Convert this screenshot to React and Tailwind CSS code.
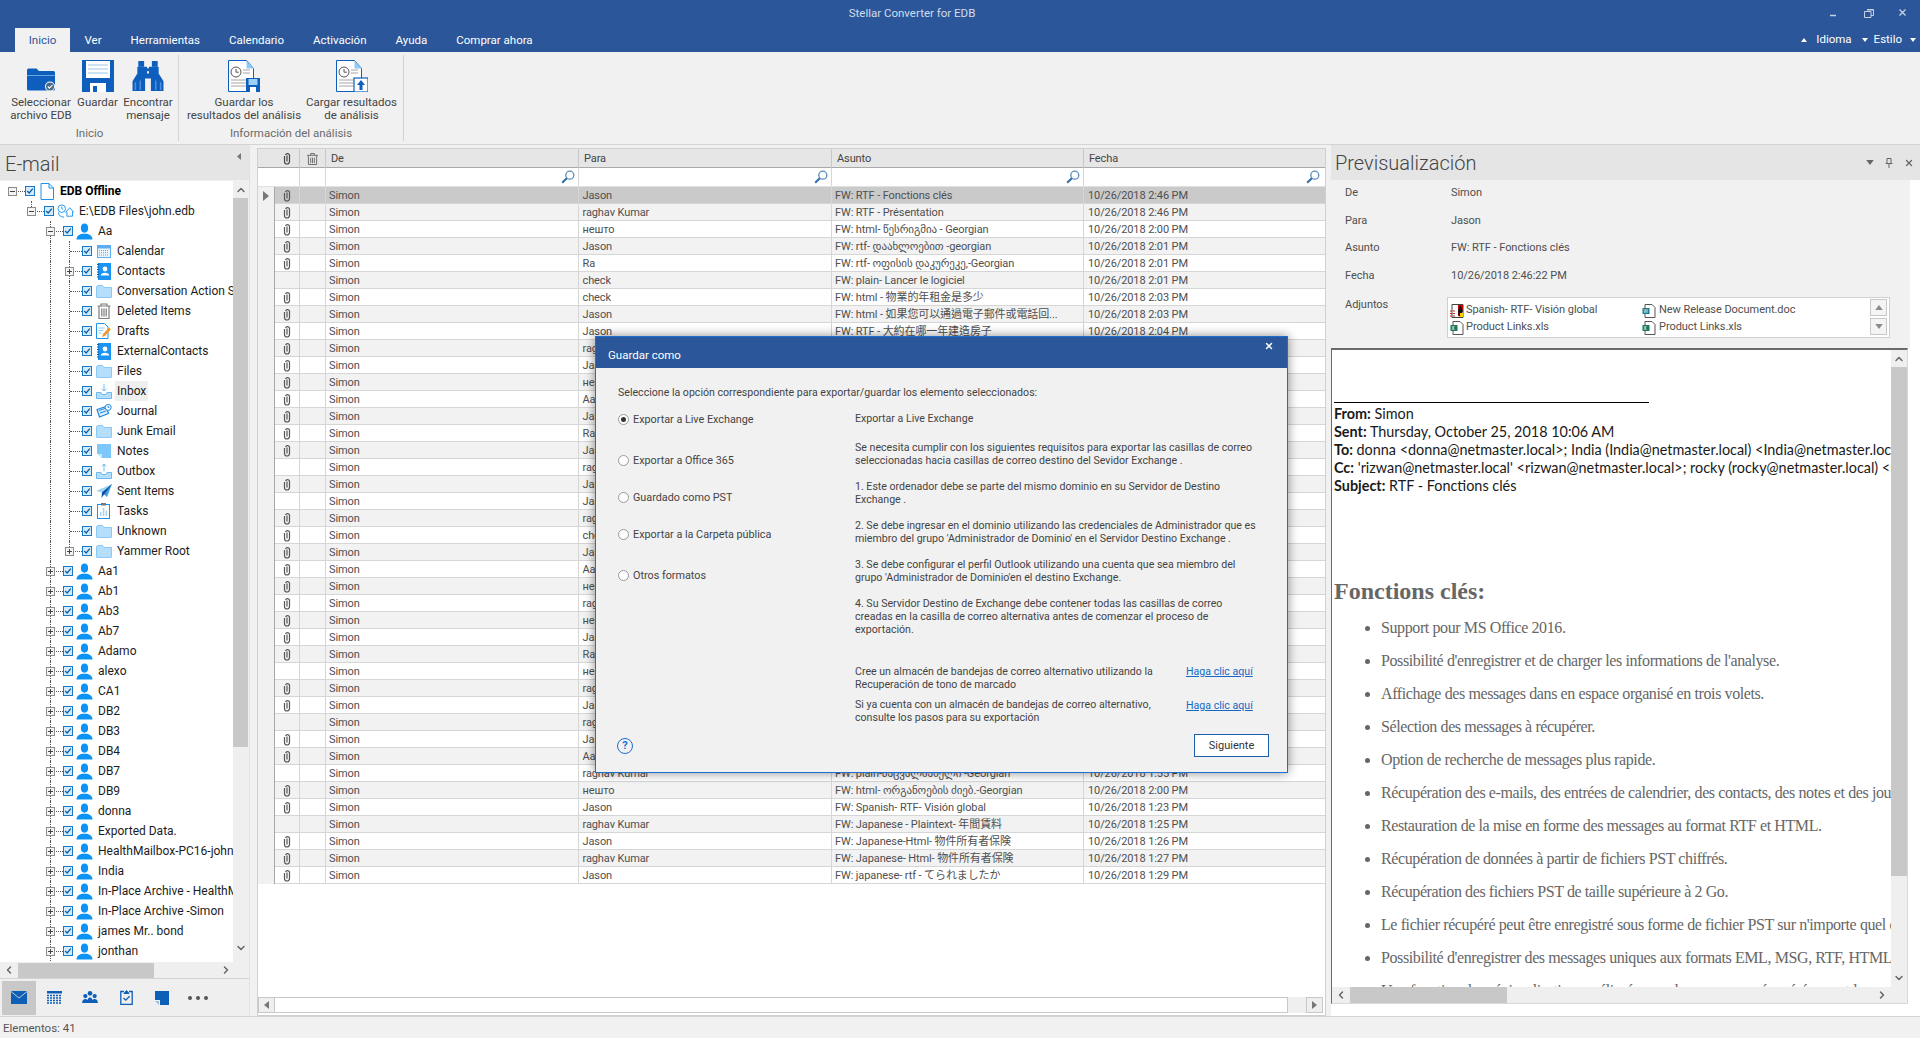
import React from 'react';
import { ChevronUp, ChevronDown, ChevronLeft, ChevronRight, X } from 'lucide-react';

const GRID_COLS = 'grid grid-cols-[17px_25px_26px_253px_253px_252px_239px_2px]';

const Check = () => (
  <span className="w-[10px] h-[10px] shrink-0 border border-[#1b78c4] bg-[#d3ebfb] flex items-center justify-center">
    <svg viewBox="0 0 10 10" className="w-[8px] h-[8px]"><path d="M1.5 5l2.5 2.5L8.5 2" fill="none" stroke="#0b5ea8" strokeWidth="1.6" /></svg>
  </span>
);

const Expander = ({ open }) => (
  <span className="relative z-10 w-[9px] h-[9px] border border-[#8c8c8c] bg-[#f4f4f4] flex items-center justify-center">
    <svg viewBox="0 0 7 7" className="w-[7px] h-[7px]">
      <path d={open ? 'M1 3.5h5' : 'M1 3.5h5M3.5 1v5'} stroke="#444" strokeWidth="1" />
    </svg>
  </span>
);

const UserIcon = () => (
  <svg viewBox="0 0 16 16" className="w-[17px] h-[17px]">
    <ellipse cx="8" cy="4.8" rx="3.4" ry="4.3" fill="#0a93f5" />
    <path d="M0.5 15.5c0-3.4 2.6-4.6 5.2-5.4h4.6c2.6.8 5.2 2 5.2 5.4z" fill="#0a93f5" />
  </svg>
);
const FolderIcon = () => (
  <svg viewBox="0 0 16 14" className="w-[16px] h-[14px]">
    <path d="M.5 2.5V13a.5.5 0 0 0 .5.5h14a.5.5 0 0 0 .5-.5V3.5H8L6.5 1.5H1.5z" fill="#b5defc" stroke="#8cc8f5" />
  </svg>
);
const DocIcon = () => (
  <svg viewBox="0 0 14 17" className="w-[14px] h-[17px]">
    <path d="M1 .5h8l4.5 4.5v11.5H1zM9 .5V5h4.5" fill="#fff" stroke="#1c92ee" />
  </svg>
);
const DbIcon = () => (
  <svg viewBox="0 0 18 16" className="w-[17px] h-[15px]" fill="none" stroke="#1c92ee">
    <circle cx="5" cy="5" r="4" /><path d="M5 2.8V5l1.6 1" />
    <path d="M9 9l4.5-5L18 9M10.5 8v5h6V8" /><path d="M1.5 9c0 3 2 5 6 5" />
  </svg>
);
const CalendarIcon = () => (
  <svg viewBox="0 0 14 13" className="w-[14px] h-[13px]">
    <rect x=".5" y=".5" width="13" height="12" fill="#eaf5fe" stroke="#5caef0" />
    <rect x=".5" y=".5" width="13" height="3" fill="#5caef0" />
    <path d="M2 5.5h10M2 7.7h10M2 10h10" stroke="#8a9aa8" strokeDasharray="1 1" />
  </svg>
);
const ContactIcon = () => (
  <svg viewBox="0 0 14 17" className="w-[14px] h-[17px]">
    <rect x="1" y="0" width="13" height="17" fill="#1a93f2" />
    <path d="M0 1.5h2M0 4h2M0 6.5h2M0 9h2M0 11.5h2M0 14h2" stroke="#0a5aa8" />
    <circle cx="8" cy="6" r="2.4" fill="#fff" /><path d="M3.8 12.5c0-2 2-2.8 4.2-2.8s4.2.8 4.2 2.8z" fill="#fff" />
  </svg>
);
const TrashIcon = () => (
  <svg viewBox="0 0 14 16" className="w-[14px] h-[16px]" fill="none" stroke="#7d7d7d" strokeWidth="1.2">
    <path d="M.5 3h13M4 3V1h6v2M2 3.5V15.5h10V3.5M4.8 5.5v8M7 5.5v8M9.2 5.5v8" />
  </svg>
);
const DraftIcon = () => (
  <svg viewBox="0 0 16 16" className="w-[16px] h-[16px]">
    <path d="M.5.5h8l3.5 3.5v11.5H.5z" fill="#fff" stroke="#1c92ee" />
    <path d="M2.5 5h6M2.5 7.5h5M2.5 10h3" stroke="#8fc8f5" />
    <path d="M6 14l1-3 6-6.5 2 2-6 6.5z" fill="#f19a2c" />
  </svg>
);
const InboxIcon = () => (
  <svg viewBox="0 0 16 16" className="w-[16px] h-[16px]">
    <path d="M.5 9.5h4.5l1 2h4l1-2h4.5v6H.5z" fill="#b5defc" stroke="#6cb9f2" />
    <path d="M8 1v7M5.8 5.8L8 8l2.2-2.2" fill="none" stroke="#6cb9f2" />
  </svg>
);
const OutboxIcon = () => (
  <svg viewBox="0 0 16 16" className="w-[16px] h-[16px]">
    <path d="M.5 9.5h4.5l1 2h4l1-2h4.5v6H.5z" fill="#b5defc" stroke="#6cb9f2" />
    <path d="M8 8.5V1M5.8 3.2L8 1l2.2 2.2" fill="none" stroke="#6cb9f2" />
  </svg>
);
const JournalIcon = () => (
  <svg viewBox="0 0 16 15" className="w-[16px] h-[15px]">
    <path d="M1 5.5l9-3 2.5 7-9 3.5z" fill="#d9eefd" stroke="#1c85e0" strokeWidth="1.2" />
    <path d="M3 6.5l6-2M4 9l6-2" stroke="#1c85e0" />
    <circle cx="12.2" cy="3.4" r="3" fill="#fff" stroke="#1c85e0" />
    <path d="M12.2 1.8v1.8h1.2" stroke="#1c85e0" fill="none" />
  </svg>
);
const NoteIcon = () => (
  <svg viewBox="0 0 14 14" className="w-[14px] h-[14px]">
    <path d="M0 0h14v14H5l-5-4.5z" fill="#7cc8fb" /><path d="M0 10h5v4z" fill="#cbe7fb" />
  </svg>
);
const SentIcon = () => (
  <svg viewBox="0 0 16 14" className="w-[16px] h-[14px]">
    <path d="M0 7L16 0 6 8.5z" fill="#9ed2f7" /><path d="M16 0L6 8.5 11 13z" fill="#3d9be8" />
    <path d="M16 0L6 8.5 5.5 14 8 10.5z" fill="#0b4f98" />
  </svg>
);
const TasksIcon = () => (
  <svg viewBox="0 0 13 16" className="w-[13px] h-[16px]">
    <rect x=".5" y="1.5" width="12" height="14" fill="#fff" stroke="#1c92ee" />
    <rect x="4" y="0" width="5" height="2.5" fill="#777" />
    <path d="M3 13V9h1.5v4zM5.8 13V5h1.5v8zM8.6 13V7.5h1.5V13z" fill="#a8d4f6" />
  </svg>
);

const ICONS = {
  user: UserIcon, folder: FolderIcon, doc: DocIcon, db: DbIcon, calendar: CalendarIcon, contact: ContactIcon,
  trash: TrashIcon, draft: DraftIcon, inbox: InboxIcon, outbox: OutboxIcon, journal: JournalIcon, note: NoteIcon,
  sent: SentIcon, tasks: TasksIcon,
};

const users = ['Aa1', 'Ab1', 'Ab3', 'Ab7', 'Adamo', 'alexo', 'CA1', 'DB2', 'DB3', 'DB4', 'DB7', 'DB9', 'donna', 'Exported Data.', 'HealthMailbox-PC16-john', 'India', 'In-Place Archive - HealthMailbox', 'In-Place Archive -Simon', 'james Mr.. bond', 'jonthan'];

const treeRows = [
  { level: 0, label: 'EDB Offline', icon: 'doc', exp: 'open', bold: true },
  { level: 1, label: 'E:\\EDB Files\\john.edb', icon: 'db', exp: 'open' },
  { level: 2, label: 'Aa', icon: 'user', exp: 'open' },
  { level: 3, label: 'Calendar', icon: 'calendar' },
  { level: 3, label: 'Contacts', icon: 'contact', exp: 'closed' },
  { level: 3, label: 'Conversation Action Settings', icon: 'folder' },
  { level: 3, label: 'Deleted Items', icon: 'trash' },
  { level: 3, label: 'Drafts', icon: 'draft' },
  { level: 3, label: 'ExternalContacts', icon: 'contact' },
  { level: 3, label: 'Files', icon: 'folder' },
  { level: 3, label: 'Inbox', icon: 'inbox', active: true },
  { level: 3, label: 'Journal', icon: 'journal' },
  { level: 3, label: 'Junk Email', icon: 'folder' },
  { level: 3, label: 'Notes', icon: 'note' },
  { level: 3, label: 'Outbox', icon: 'outbox' },
  { level: 3, label: 'Sent Items', icon: 'sent' },
  { level: 3, label: 'Tasks', icon: 'tasks' },
  { level: 3, label: 'Unknown', icon: 'folder' },
  { level: 3, label: 'Yammer Root', icon: 'folder', exp: 'closed', last: true },
  ...users.map(label => ({ level: 2, label, icon: 'user', exp: 'closed' })),
];

const TreeRow = ({ row }) => {
  const Icon = ICONS[row.icon];
  return (
    <div className="flex items-center h-5 pl-[2.5px] whitespace-nowrap">
      {[0, 1, 2, 3].slice(0, row.level + 1).map(i => {
        const own = i === row.level;
        return (
          <div key={i} className="relative w-[19px] h-5 shrink-0 flex items-center justify-center">
            {row.level === 3 && i === 2 && <span className="absolute left-[9px] top-0 bottom-0 border-l border-dotted border-[#555]" />}
            {own && row.level > 0 && (
              <span className={`absolute left-[9px] top-0 border-l border-dotted border-[#555] ${row.last || row.level === 1 ? 'h-[10px]' : 'bottom-0'}`} />
            )}
            {own && <span className="absolute left-[10px] right-[-3px] top-[10px] border-t border-dotted border-[#555]" />}
            {own && row.exp && <Expander open={row.exp === 'open'} />}
          </div>
        );
      })}
      <span className="ml-[3.5px]"><Check /></span>
      <span className="w-[23px] shrink-0 flex items-center justify-center"><Icon /></span>
      <span className={`px-0.5 h-5 leading-5 ${row.active ? 'bg-[#efefef]' : ''} ${row.bold ? 'font-bold text-black' : ''}`}>{row.label}</span>
    </div>
  );
};

const Clip = ({ dark }) => (
  <svg viewBox="0 0 8 13" className="w-[8px] h-[13px]" fill="none" stroke={dark ? '#444' : '#555'} strokeWidth="1.2">
    <path d="M1.5 4v5.5a2.500 2.500 0 0 0 5 0V3a2.200 2.200 0 0 0-4 0" />
    <path d="M4 3.500v6" />
  </svg>
);

const Search = () => (
  <svg viewBox="0 0 14 14" className="w-[14px] h-[14px]" fill="none">
    <circle cx="8.8" cy="5.2" r="4" stroke="#5a8cbd" strokeWidth="1.3" />
    <path d="M5.8 8.2L1.2 12.8" stroke="#2f6ca8" strokeWidth="2" />
  </svg>
);

const rows = [
  ['Jason', 'FW: RTF - Fonctions clés', '2:46 PM'],
  ['raghav Kumar', 'FW: RTF - Présentation', '2:46 PM'],
  ['нешто', 'FW: html- წესრიგმია - Georgian', '2:00 PM'],
  ['Jason', 'FW: rtf- დაახლოებით -georgian', '2:01 PM'],
  ['Ra', 'FW: rtf- ოფისის დაკურეკე,-Georgian', '2:01 PM'],
  ['check', 'FW: plain- Lancer le logiciel', '2:01 PM'],
  ['check', 'FW: html - 物業的年租金是多少', '2:03 PM'],
  ['Jason', 'FW: html - 如果您可以通過電子郵件或電話回...', '2:03 PM'],
  ['Jason', 'FW: RTF - 大約在哪一年建造房子', '2:04 PM'],
  ['raghav Kumar'], ['Jason'], ['нешто'], ['Aa'], ['Jason'], ['Ra'], ['Jason'], ['raghav Kumar'], ['Jason'], ['Jason'], ['raghav Kumar'], ['check'], ['Jason'],
  ['Aa'], ['нешто'], ['raghav Kumar'], ['нешто'], ['Jason'], ['Ra'], ['нешто'], ['raghav Kumar'], ['Jason'], ['raghav Kumar'], ['Jason'], ['Aa'],
  ['raghav Kumar', 'FW: plain-ნაცვალსახელი -Georgian', '1:55 PM'],
  ['нешто', 'FW: html- ორგანოების ძიებ.-Georgian', '2:00 PM'],
  ['Jason', 'FW: Spanish- RTF- Visión global', '1:23 PM'],
  ['raghav Kumar', 'FW: Japanese - Plaintext- 年間賃料', '1:25 PM'],
  ['Jason', 'FW: Japanese-Html- 物件所有者保険', '1:26 PM'],
  ['raghav Kumar', 'FW: Japanese- Html- 物件所有者保険', '1:27 PM'],
  ['Jason', 'FW: japanese- rtf - てられましたか', '1:29 PM'],
];
const noClip = [6, 17, 19, 29, 32, 35, 38];

const GridRow = ({ row, n }) => {
  const selected = n === 1;
  const bg = selected ? 'bg-[#cacaca]' : n % 2 === 0 ? 'bg-[#f2f2f2]' : 'bg-white';
  const cell = 'h-[17px] border-r border-b border-[#d6d6d6] flex items-center overflow-hidden whitespace-nowrap';
  return (
    <div className={GRID_COLS}>
      <div className="h-[17px] bg-[#f1f1f1] border-r border-[#a8a8a8] flex items-center justify-center">
        {selected && <svg viewBox="0 0 6 10" className="w-[6px] h-[10px]"><path d="M0 0l6 5-6 5z" fill="#777" /></svg>}
      </div>
      <div className={`${cell} ${bg} justify-center`}>{!noClip.includes(n) && <Clip />}</div>
      <div className={`${cell} ${bg}`} />
      <div className={`${cell} ${bg} pl-[3px] pt-[2px]`}>Simon</div>
      <div className={`${cell} ${bg} pl-[3.500px] pt-[2px]`}>{row[0]}</div>
      <div className={`${cell} ${bg} pl-[3px] pt-[2px]`}>{row[1]}</div>
      <div className={`${cell} ${bg} pl-[4px] pt-[2px] border-r-0`}>{row[2] ? `10/26/2018 ${row[2]}` : ''}</div>
      <div className={`h-[17px] border-b border-[#d6d6d6] ${bg}`} />
    </div>
  );
};

const FolderCheck = () => (
  <svg viewBox="0 0 28 25" className="w-[28px] h-[25px]">
    <path d="M0 3a1.5 1.5 0 0 1 1.5-1.5h8L12 4h14.5A1.5 1.5 0 0 1 28 5.500V22a1.500 1.500 0 0 1-1.500 1.500h-25A1.500 1.500 0 0 1 0 22z" fill="#0e5fbd" />
    <path d="M0 8.500h28" stroke="#6aa4e0" />
    <circle cx="23" cy="19.500" r="5" fill="#fff" /><circle cx="23" cy="19.500" r="4" fill="#4a6a8a" />
    <path d="M20.800 19.500l1.600 1.600 3-3" fill="none" stroke="#fff" strokeWidth="1.100" />
  </svg>
);
const FloppyBig = () => (
  <svg viewBox="0 0 32 32" className="w-[32px] h-[32px]">
    <path d="M0 0h32v32H0z" fill="#0e5fbd" />
    <rect x="4" y="1" width="24" height="17" fill="#fff" />
    <path d="M6 5h20M6 9h20M6 13h20" stroke="#9cc6ec" />
    <rect x="8" y="23" width="16" height="9" fill="#fff" /><rect x="11" y="26" width="4" height="6" fill="#0e5fbd" />
  </svg>
);
const Binoculars = () => (
  <svg viewBox="0 0 32 32" className="w-[32px] h-[31px]" fill="#0e5fbd">
    <rect x="6" y="0" width="6" height="6" /><rect x="20" y="0" width="6" height="6" />
    <path d="M5 6h10v7h2V6h10v7l5 8v10H19V18h-6v13H0V21l5-8z" />
    <path d="M3 22v8M8 20v10M24 20v10M29 22v8" stroke="#4b92dc" strokeWidth="1.500" />
    <path d="M13 9h6" stroke="#0e5fbd" strokeWidth="3" />
  </svg>
);
const ClockDoc = ({ badge }) => (
  <svg viewBox="0 0 32 32" className="w-[32px] h-[32px]">
    <path d="M.5.5h18l7 8v23H.5z" fill="#fff" stroke="#0e5fbd" />
    <path d="M18.500.5v8h7z" fill="#8ecbf2" />
    <circle cx="8" cy="12" r="5" fill="#fff" stroke="#555" /><path d="M8 9v3.200h2.800" fill="none" stroke="#555" />
    <path d="M15 10h7M15 13h7M3 20h20M3 23h15M3 26h15" stroke="#a5a5a5" />
    {badge === 'save' ? (
      <g><rect x="18" y="18" width="14" height="14" fill="#0e5fbd" /><rect x="20.500" y="19" width="9" height="6" fill="#9ad0f5" /><rect x="22" y="27" width="6" height="5" fill="#fff" /></g>
    ) : (
      <g><rect x="18" y="18" width="14" height="14" fill="#fff" stroke="#0e5fbd" strokeWidth="1.200" /><path d="M25 20l4 5h-2.500v5h-3v-5H21z" fill="#0e5fbd" /></g>
    )}
  </svg>
);

const RibbonButton = ({ icon, lines, w }) => (
  <div className={`flex flex-col items-center text-center leading-[13px] ${w}`}>
    <div className="h-[32px] flex items-end justify-center">{icon}</div>
    <div className="mt-1 whitespace-nowrap">{lines.map(l => <div key={l}>{l}</div>)}</div>
  </div>
);

const RibbonGroup = ({ label, pl, w, children }) => (
  <div className={`mt-[3px] h-[86px] border-r border-[#d4d4d4] flex flex-col shrink-0 ${w}`}>
    <div className={`h-[72px] pt-[5px] flex gap-[5px] ${pl}`}>{children}</div>
    <div className="text-center leading-[13px] text-[#6b6b6b]">{label}</div>
  </div>
);

const Tri = ({ up, size = 'w-[6px] h-[4px]', color = '#fff' }) => (
  <svg viewBox="0 0 6 4" className={size}><path d={up ? 'M0 4l3-4 3 4z' : 'M0 0h6L3 4z'} fill={color} /></svg>
);

const Header = () => (
  <div className="h-[52px] bg-[#2b579a] shrink-0 flex flex-col">
    <div className="h-[28px] relative flex items-center justify-center text-[#d3dceb] text-[11.500px]">
      <span className="mr-[96px] -mt-[1px]">Stellar Converter for EDB</span>
      <div className="absolute right-0 top-0 h-[28px] w-[100px]">
        <svg viewBox="0 0 100 28" className="w-[100px] h-[28px]" fill="none" stroke="#c9d1de">
          <path d="M10 15.500h6" strokeWidth="1.500" />
          <path d="M47 10h7M44.500 11.500h6.500v6h-6.500zM47 9.500h6.500v6H51" />
          <path d="M79.500 9.500l6 6M85.500 9.500l-6 6" strokeWidth="1.300" />
        </svg>
      </div>
    </div>
    <div className="h-[24px] flex items-end pl-[15px] text-white text-[11.500px]">
      <div className="h-[24px] w-[55px] text-center bg-[#f1f1f1] text-[#2b579a] leading-[24px]">Inicio</div>
      {['Ver', 'Herramientas', 'Calendario', 'Activación', 'Ayuda', 'Comprar ahora'].map(t => (
        <div key={t} className="h-[24px] px-[14.500px] leading-[24px]">{t}</div>
      ))}
      <div className="ml-auto flex items-center h-[24px] pr-[4px]">
        <Tri up />
        <span className="ml-[9px] mr-[10px]">Idioma</span>
        <Tri />
        <span className="ml-[6px] mr-[8px]">Estilo</span>
        <Tri />
      </div>
    </div>
  </div>
);

const Ribbon = () => (
  <div className="h-[93px] shrink-0 bg-[#f1f1f1] border-b border-[#d4d4d4] flex pl-[1px] text-[#444] text-[11.500px]">
    <RibbonGroup label="Inicio" pl="pl-[9px]" w="w-[178px]">
      <RibbonButton icon={<FolderCheck />} lines={['Seleccionar', 'archivo EDB']} w="w-[62px]" />
      <RibbonButton icon={<FloppyBig />} lines={['Guardar']} w="w-[41px]" />
      <RibbonButton icon={<Binoculars />} lines={['Encontrar', 'mensaje']} w="w-[50px]" />
    </RibbonGroup>
    <RibbonGroup label="Información del análisis" pl="pl-[8px]" w="w-[225px]">
      <RibbonButton icon={<ClockDoc badge="save" />} lines={['Guardar los', 'resultados del análisis']} w="w-[114px]" />
      <RibbonButton icon={<ClockDoc badge="up" />} lines={['Cargar resultados', 'de análisis']} w="w-[91px]" />
    </RibbonGroup>
  </div>
);

const MailIcon = () => (
  <svg viewBox="0 0 16 13" className="w-[16px] h-[13px]"><path d="M0 0h16v13H0z" fill="#0d5fb8" /><path d="M0 .5l8 6.500 8-6.500" fill="none" stroke="#c8c8c8" strokeWidth="1" /></svg>
);
const GridIcon = () => (
  <svg viewBox="0 0 15 13" className="w-[15px] h-[13px]"><path d="M0 0h15v2.500H0z" fill="#0d5fb8" /><path d="M0 4.500h15M0 7h15M0 9.500h15M0 12h15" stroke="#0d5fb8" strokeWidth="1.300" strokeDasharray="2 1" /></svg>
);
const PeopleIcon = () => (
  <svg viewBox="0 0 17 14" className="w-[16px] h-[13px]" fill="#0d5fb8">
    <circle cx="8.500" cy="2.500" r="2.500" /><circle cx="3.500" cy="5.500" r="2.300" /><circle cx="13.500" cy="5.500" r="2.300" />
    <path d="M0 13c0-3 1.500-4.500 3.500-4.500S7 10 7 13zM10 13c0-3 1.500-4.500 3.500-4.500S17 10 17 13zM5.500 13c0-4 1-6 3-6s3 2 3 6z" />
  </svg>
);
const ClipboardIcon = () => (
  <svg viewBox="0 0 13 15" className="w-[13px] h-[15px]" fill="none" stroke="#0d5fb8">
    <path d="M4 1.500H.8v13h11.400v-13H9" strokeWidth="1.300" /><path d="M4 3.500l2.500-3L9 3.500z" fill="#0d5fb8" /><path d="M3.500 8l2.200 2.200 4-4" strokeWidth="1.300" />
  </svg>
);
const NoteBlue = () => (
  <svg viewBox="0 0 14 14" className="w-[14px] h-[14px]"><path d="M0 0h14v14H5V9H0z" fill="#0d5fb8" /><path d="M0 10h4v4z" fill="#9dbfe3" /></svg>
);

const LeftPanel = () => (
  <div className="w-[250px] shrink-0 flex flex-col border-r border-[#e2e2e2] bg-[#efefef]">
    <div className="h-[35px] bg-[#e5e5e5] flex items-center justify-between pl-[5px] pr-[8px] shrink-0">
      <span className="text-[20px] font-light text-[#444] leading-[38px] mt-[3px]">E-mail</span>
      <svg viewBox="0 0 4 7" className="w-[4px] h-[7px] -mt-[12px]"><path d="M4 0L0 3.500 4 7z" fill="#777" /></svg>
    </div>
    <div className="mt-px h-[781px] flex shrink-0">
      <div className="w-[233px] bg-white overflow-hidden text-[12px] text-[#1c1c1c]">
        {treeRows.map(r => <TreeRow key={r.label} row={r} />)}
      </div>
      <div className="w-[15px] flex flex-col items-center">
        <div className="h-[17px] flex items-center justify-center"><ChevronUp size={12} strokeWidth={3} color="#666" /></div>
        <div className="w-[15px] h-[549px] bg-[#c8c8c8]" />
        <div className="flex-1" />
        <div className="h-[20px] flex items-start justify-center"><ChevronDown size={12} strokeWidth={3} color="#666" /></div>
      </div>
    </div>
    <div className="h-[16px] flex items-center shrink-0">
      <div className="w-[18px] flex justify-center"><ChevronLeft size={12} strokeWidth={3} color="#666" /></div>
      <div className="w-[136px] h-[15px] bg-[#c8c8c8]" />
      <div className="w-[78px] flex justify-end"><ChevronRight size={12} strokeWidth={3} color="#666" /></div>
    </div>
    <div className="h-[38px] border-t border-[#d4d4d4] flex items-center pl-[2px] shrink-0">
      <div className="w-[34px] h-[34px] bg-[#c8c8c8] flex items-center justify-center"><MailIcon /></div>
      <div className="w-[36px] flex justify-center"><GridIcon /></div>
      <div className="w-[36px] flex justify-center"><PeopleIcon /></div>
      <div className="w-[36px] flex justify-center"><ClipboardIcon /></div>
      <div className="w-[36px] flex justify-center"><NoteBlue /></div>
      <div className="w-[36px] flex justify-center gap-[4px]">
        <span className="w-[4px] h-[4px] rounded-full bg-[#555]" /><span className="w-[4px] h-[4px] rounded-full bg-[#555]" /><span className="w-[4px] h-[4px] rounded-full bg-[#555]" />
      </div>
    </div>
  </div>
);

const GridPanel = () => (
  <div className="ml-[7px] w-[1069px] shrink-0 mt-[3px] bg-white border-x border-b border-[#d0d0d0] border-t flex flex-col text-[11px] tracking-[-0.1px] text-[#4f4f4f] [font-family:Roboto,'Noto_Sans_CJK_TC','DejaVu_Sans',sans-serif]">
    <div className={`${GRID_COLS} h-[19px] bg-[#e6e6e6] border-b border-[#a9a9a9] text-[#444]`}>
      <div />
      <div className="border-r border-[#c8c8c8] flex items-center justify-center"><Clip dark /></div>
      <div className="border-r border-[#c8c8c8] flex items-center justify-center">
        <svg viewBox="0 0 12 13" className="w-[11px] h-[12px]" fill="none" stroke="#666"><path d="M0 2.500h12M4 2.500V.5h4v2M1.500 3v9.500h9V3M4 5v6M6 5v6M8 5v6" /></svg>
      </div>
      <div className="border-r border-[#c8c8c8] pl-[5px] leading-[19px]">De</div>
      <div className="border-r border-[#c8c8c8] pl-[5px] leading-[19px]">Para</div>
      <div className="border-r border-[#c8c8c8] pl-[5px] leading-[19px]">Asunto</div>
      <div className="pl-[5px] leading-[19px]">Fecha</div>
      <div />
    </div>
    <div className={`${GRID_COLS} h-[19px] border-b border-[#e0e0e0]`}>
      <div className="col-span-2 border-r border-[#d6d6d6]" />
      <div className="border-r border-[#d6d6d6]" />
      {[0, 1, 2].map(i => <div key={i} className="border-r border-[#d6d6d6] flex items-center justify-end pr-[3px]"><Search /></div>)}
      <div className="flex items-center justify-end pr-[3px]"><Search /></div>
      <div />
    </div>
    <div>
      {rows.map((r, i) => <GridRow key={i} row={r} n={i + 1} />)}
    </div>
    <div className="flex-1" />
    <div className="h-[16px] mb-[2px] mr-[2px] flex items-stretch shrink-0">
      <div className="w-[17px] bg-[#efefef] border border-[#c8c8c8] flex items-center justify-center"><svg viewBox="0 0 5 8" className="w-[5px] h-[8px]"><path d="M5 0L0 4l5 4z" fill="#777" /></svg></div>
      <div className="w-[1013px] border-y border-r border-[#c8c8c8] bg-white" />
      <div className="flex-1 bg-[#efefef]" />
      <div className="w-[17px] bg-[#efefef] border border-[#c8c8c8] flex items-center justify-center"><svg viewBox="0 0 5 8" className="w-[5px] h-[8px]"><path d="M0 0l5 4-5 4z" fill="#777" /></svg></div>
    </div>
  </div>
);

const FileIcon = ({ letter, color }) => (
  <svg viewBox="0 0 14 14" className="w-[14px] h-[14px] shrink-0">
    <path d="M3 .5h7l3 3v10H3z" fill="#fff" stroke="#555" />
    <rect x=".5" y="4" width="7" height="6" fill={color} />
    <text x="1.500" y="9" fontSize="5" fill="#fff">{letter}</text>
  </svg>
);
const RtfIcon = () => (
  <svg viewBox="0 0 14 14" className="w-[14px] h-[14px] shrink-0">
    <path d="M2 .5h11v13H2z" fill="#fff" stroke="#444" /><path d="M8 1h5v4L11 12H8z" fill="#c00" /><path d="M10 1l3 6-4 6-1-6z" fill="#111" />
    <path d="M0 7h6M0 9.500h6M0 12h6" stroke="#c22" strokeWidth="1.200" strokeDasharray="2 1" /><path d="M10 9h3v4h-3z" fill="#f5d400" />
  </svg>
);

const InfoRow = ({ label, value, h }) => (
  <div className={`flex items-center ${h}`}>
    <div className="w-[120px] pl-[14px]">{label}</div>
    <div>{value}</div>
  </div>
);

const bullets = [
  'Support pour MS Office 2016.',
  "Possibilité d'enregistrer et de charger les informations de l'analyse.",
  'Affichage des messages dans en espace organisé en trois volets.',
  'Sélection des messages à récupérer.',
  'Option de recherche de messages plus rapide.',
  'Récupération des e-mails, des entrées de calendrier, des contacts, des notes et des journaux.',
  'Restauration de la mise en forme des messages au format RTF et HTML.',
  'Récupération de données à partir de fichiers PST chiffrés.',
  'Récupération des fichiers PST de taille supérieure à 2 Go.',
  "Le fichier récupéré peut être enregistré sous forme de fichier PST sur n'importe quel emplacement.",
  "Possibilité d'enregistrer des messages uniques aux formats EML, MSG, RTF, HTML et PDF.",
  'Une fonction de prévisualisation améliorée pour les messages récupérés avant la sauvegarde.',
];

const PreviewPanel = () => (
  <div className="ml-[5px] w-[589px] shrink-0 flex flex-col bg-white text-[11px] tracking-[-0.05px] text-[#4f4f4f]">
    <div className="h-[35px] bg-[#e5e5e5] flex items-center pl-[4px] shrink-0">
      <span className="text-[20px] tracking-normal font-light text-[#444]">Previsualización</span>
      <div className="ml-auto flex items-center pr-[6px] gap-[11px]">
        <Tri size="w-[8px] h-[5px]" color="#666" />
        <svg viewBox="0 0 8 10" className="w-[8px] h-[10px]" fill="none" stroke="#666"><path d="M2 .5h4v5H2zM.5 5.500h7M4 6v4" /></svg>
        <X size={10} strokeWidth={3} color="#666" />
      </div>
    </div>
    <div className="w-[579px] h-[168px] bg-[#f1f1f1] flex flex-col shrink-0 pt-[4px]">
      <InfoRow label="De" value="Simon" h="h-[18px]" />
      <InfoRow label="Para" value="Jason" h="h-[10px] mt-[14px]" />
      <InfoRow label="Asunto" value="FW: RTF - Fonctions clés" h="h-[10px] mt-[17px]" />
      <InfoRow label="Fecha" value="10/26/2018 2:46:22 PM" h="h-[10px] mt-[18px]" />
      <div className="flex mt-[16px] pl-[14px]">
        <div className="w-[102px] leading-[13px] pt-px">Adjuntos</div>
        <div className="w-[443px] h-[41px] bg-white border border-[#d0d0d0] flex">
          <div className="flex-1 grid grid-cols-[192px_1fr] auto-rows-[17px] pt-[4px] pl-[2px]">
            <div className="flex items-center gap-[2px]"><RtfIcon />Spanish- RTF- Visión global</div>
            <div className="flex items-center gap-[3px]"><FileIcon letter="W" color="#1b7a8a" />New Release Document.doc</div>
            <div className="flex items-center gap-[2px]"><FileIcon letter="X" color="#1b7a5a" />Product Links.xls</div>
            <div className="flex items-center gap-[3px]"><FileIcon letter="X" color="#1b7a5a" />Product Links.xls</div>
          </div>
          <div className="w-[17px] mr-[2px] flex flex-col gap-[2px] pt-[1px]">
            <div className="h-[17px] border border-[#c8c8c8] bg-[#f4f4f4] flex items-center justify-center"><Tri up size="w-[8px] h-[5px]" color="#8a8a8a" /></div>
            <div className="h-[17px] border border-[#c8c8c8] bg-[#f4f4f4] flex items-center justify-center"><Tri size="w-[8px] h-[5px]" color="#8a8a8a" /></div>
          </div>
        </div>
      </div>
    </div>
    <div className="w-[577px] h-[656px] border-t-2 border-l border-r border-b border-t-[#6a6a6a] border-l-[#6a6a6a] border-r-[#d8d8d8] border-b-[#d8d8d8] flex flex-col shrink-0">
      <div className="flex-1 flex min-h-0">
        <div className="flex-1 overflow-hidden pl-[2px] whitespace-nowrap">
          <div className="h-[53px] w-[315px] border-b border-black" />
          <div className="[font-family:Lato,sans-serif] text-[14.400px] tracking-normal leading-[18px] text-[#1a1a1a] pt-[2px]">
            <div><b>From:</b> Simon</div>
            <div><b>Sent:</b> Thursday, October 25, 2018 10:06 AM</div>
            <div><b>To:</b> donna &lt;donna@netmaster.local&gt;; India (India@netmaster.local) &lt;India@netmaster.local&gt;</div>
            <div><b>Cc:</b> 'rizwan@netmaster.local' &lt;rizwan@netmaster.local&gt;; rocky (rocky@netmaster.local) &lt;rocky@netmaster.local&gt;</div>
            <div><b>Subject:</b> RTF - Fonctions clés</div>
          </div>
          <div className="[font-family:'Liberation_Serif',serif] text-[#666]">
            <div className="mt-[82px] text-[24px] tracking-normal font-bold leading-[28px]">Fonctions clés:</div>
            <ul className="mt-[14px] list-disc pl-[47px] flex flex-col gap-[15px] text-[16px] tracking-[-0.4px] leading-[18px]">
              {bullets.map(b => <li key={b}>{b}</li>)}
            </ul>
          </div>
        </div>
        <div className="w-[16px] bg-[#efefef] flex flex-col items-center shrink-0">
          <div className="h-[17px] flex items-center justify-center"><ChevronUp size={12} strokeWidth={3} color="#666" /></div>
          <div className="w-[16px] h-[509px] bg-[#c8c8c8]" />
          <div className="flex-1" />
          <div className="h-[18px] flex items-center justify-center"><ChevronDown size={12} strokeWidth={3} color="#666" /></div>
        </div>
      </div>
      <div className="h-[16px] bg-[#efefef] flex items-center shrink-0">
        <div className="w-[18px] flex justify-center"><ChevronLeft size={12} strokeWidth={3} color="#666" /></div>
        <div className="w-[157px] h-[16px] bg-[#c8c8c8]" />
        <div className="w-[382px] flex justify-end pr-[1px]"><ChevronRight size={12} strokeWidth={3} color="#666" /></div>
      </div>
    </div>
    <div className="flex-1 bg-white" />
  </div>
);

const RadioOption = ({ label, mt, checked }) => (
  <div className={`flex items-center h-4 ${mt}`}>
    <span className="w-[11px] h-[11px] rounded-full border border-[#9a9a9a] bg-white flex items-center justify-center shrink-0">
      {checked && <span className="w-[5px] h-[5px] rounded-full bg-[#333]" />}
    </span>
    <span className="ml-[4px]">{label}</span>
  </div>
);

const SaveDialog = () => (
  <div className="absolute left-[595px] top-[336px] w-[693px] h-[437px] bg-[#f1f1f1] border border-[#1a6fd0] shadow-[0_0_10px_rgba(0,0,0,0.45)] flex flex-col text-[10.600px] leading-[13px] text-[#444] [font-family:Roboto,sans-serif]">
    <div className="h-[31px] bg-[#2b579a] text-white text-[11.500px] flex items-center justify-between pl-[12px] pr-[13px] shrink-0">
      <span className="mt-[5px]">Guardar como</span>
      <X size={10} strokeWidth={3.500} color="#fff" className="-mt-[14px]" />
    </div>
    <div className="pl-[22px] pt-[18px]">Seleccione la opción correspondiente para exportar/guardar los elemento seleccionados:</div>
    <div className="flex pl-[22px]">
      <div className="w-[237px] pt-[12px] shrink-0 text-[10.800px]">
        <RadioOption label="Exportar a Live Exchange" checked />
        <RadioOption label="Exportar a Office 365" mt="mt-[25px]" />
        <RadioOption label="Guardado como PST" mt="mt-[21px]" />
        <RadioOption label="Exportar a la Carpeta pública" mt="mt-[21px]" />
        <RadioOption label="Otros formatos" mt="mt-[25px]" />
      </div>
      <div className="pt-[13px] w-[412px]">
        <div>Exportar a Live Exchange</div>
        <div className="mt-[16px]">Se necesita cumplir con los siguientes requisitos para exportar las casillas de correo<br />seleccionadas hacia casillas de correo destino del Sevidor Exchange .</div>
        <div className="mt-[13px]">1. Este ordenador debe se parte del mismo dominio en su Servidor de Destino<br />Exchange .</div>
        <div className="mt-[13px]">2. Se debe ingresar en el dominio utilizando las credenciales de Administrador  que es<br />miembro del grupo 'Administrador de Dominio' en el Servidor Destino Exchange .</div>
        <div className="mt-[13px]">3. Se debe configurar el perfil  Outlook utilizando una cuenta que sea miembro del<br />grupo 'Administrador de Dominio'en el destino Exchange.</div>
        <div className="mt-[13px]">4. Su Servidor Destino de Exchange debe contener todas las casillas de correo<br />creadas en la casilla de correo alternativa antes de comenzar el proceso de<br />exportación.</div>
        <div className="mt-[29px] flex">
          <div className="w-[331px]">Cree un almacén de bandejas de correo alternativo utilizando la<br />Recuperación de tono de marcado</div>
          <a className="text-[#1469c7] underline">Haga clic aquí</a>
        </div>
        <div className="mt-[7px] flex">
          <div className="w-[331px]">Si ya cuenta con un almacén de bandejas de correo alternativo,<br />consulte los pasos para su exportación</div>
          <a className="text-[#1469c7] underline mt-[1px]">Haga clic aquí</a>
        </div>
      </div>
    </div>
    <div className="mt-auto flex items-center justify-between pl-[21px] pr-[18px] pb-[15px]">
      <span className="w-[16px] h-[16px] rounded-full border border-[#1a6fd0] text-[#1a6fd0] flex items-center justify-center text-[11px] font-bold">?</span>
      <button className="w-[75px] h-[23px] bg-white border border-[#1a5fb0] text-[11px] text-[#333]">Siguiente</button>
    </div>
  </div>
);

export default function App() {
  return (
    <div className="relative w-[1920px] h-[1038px] overflow-hidden flex flex-col bg-[#f1f1f1] [font-family:Roboto,sans-serif]">
      <Header />
      <Ribbon />
      <div className="h-[871px] flex shrink-0">
        <LeftPanel />
        <GridPanel />
        <PreviewPanel />
      </div>
      <div className="h-[22px] shrink-0 border-t border-[#d4d4d4] pl-[3px] text-[11.500px] leading-[22px] text-[#555]">Elementos: 41</div>
      <SaveDialog />
    </div>
  );
}
